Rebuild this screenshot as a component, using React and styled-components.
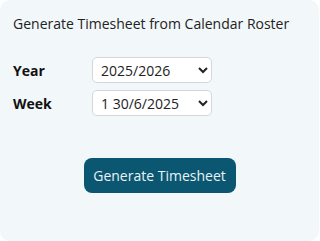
import React, { useState } from 'react'
import styled, { createGlobalStyle } from 'styled-components'

const GlobalStyle = createGlobalStyle`
  html, body {
    margin: 0;
    padding: 0;
    background: #ffffff;
  }
  body {
    font-family: "Open Sans", "Noto Sans", sans-serif;
  }
`;

const Card = styled.div`
  box-sizing: border-box;
  width: 319px;
  height: 241px;
  background: #f2f7fa;
  border-radius: 10px;
  padding: 14px 13px 0 13px;
  display: flex;
  flex-direction: column;
`;

const Title = styled.h3`
  margin: 0;
  font-size: 14px;
  font-weight: 400;
  line-height: 20px;
  color: #222;
`;

const Form = styled.div`
  margin-top: 23px;
  display: grid;
  grid-template-columns: 79px 120px;
  row-gap: 7px;
  align-items: center;
`;

const Label = styled.label`
  font-size: 14px;
  font-weight: 700;
  color: #111;
`;

const Select = styled.select`
  box-sizing: border-box;
  width: 120px;
  height: 26px;
  font-family: "Open Sans", "Noto Sans", sans-serif;
  font-size: 14px;
  color: #222;
  background: #fff;
  border: 1px solid #d3d7db;
  border-radius: 5px;
  padding: 0 4px;
`;

const Actions = styled.div`
  margin-top: 42px;
  display: flex;
  justify-content: center;
`;

const Button = styled.button`
  width: 152px;
  height: 35px;
  background: #0b5670;
  color: #e8f3f8;
  border: none;
  border-radius: 8px;
  font-family: "Open Sans", "Noto Sans", sans-serif;
  font-size: 14px;
  cursor: pointer;
`;

const years = ['2025/2026', '2024/2025', '2026/2027'];
const weeks = ['1 30/6/2025', '2 7/7/2025', '3 14/7/2025'];

export default function App() {
  const [year, setYear] = useState(years[0]);
  const [week, setWeek] = useState(weeks[0]);

  return (
    <>
      <GlobalStyle />
      <Card>
        <Title>Generate Timesheet from Calendar Roster</Title>
        <Form>
          <Label htmlFor="year">Year</Label>
          <Select id="year" value={year} onChange={(e) => setYear(e.target.value)}>
            {years.map((y) => <option key={y}>{y}</option>)}
          </Select>
          <Label htmlFor="week">Week</Label>
          <Select id="week" value={week} onChange={(e) => setWeek(e.target.value)}>
            {weeks.map((w) => <option key={w}>{w}</option>)}
          </Select>
        </Form>
        <Actions>
          <Button>Generate Timesheet</Button>
        </Actions>
      </Card>
    </>
  )
}
